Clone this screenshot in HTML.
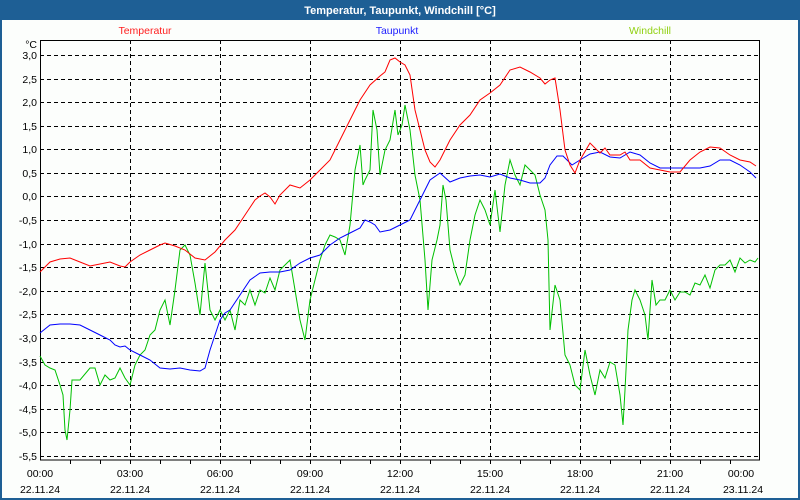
<!DOCTYPE html>
<html><head><meta charset="utf-8"><style>
html,body{margin:0;padding:0;width:800px;height:500px;overflow:hidden;background:#fcfefc;}
svg{display:block;}
</style></head><body>
<svg width="800" height="500" xmlns="http://www.w3.org/2000/svg" font-family="Liberation Sans, sans-serif" font-size="10.5">
<rect x="0" y="0" width="800" height="500" fill="#fcfefc"/>
<rect x="0" y="0" width="800" height="20" fill="#1e5f95"/>
<rect x="0" y="0" width="2" height="500" fill="#1e5f95"/>
<rect x="798" y="0" width="2" height="500" fill="#1e5f95"/>
<rect x="0" y="498" width="800" height="2" fill="#1e5f95"/>
<text x="400" y="14" fill="#fff" font-weight="bold" font-size="11" text-anchor="middle">Temperatur, Taupunkt, Windchill [°C]</text>
<text x="145" y="34" fill="#ff2020" text-anchor="middle">Temperatur</text>
<text x="397" y="34" fill="#2020ff" text-anchor="middle">Taupunkt</text>
<text x="650" y="34" fill="#90d010" text-anchor="middle">Windchill</text>
<g stroke="#000" stroke-width="1" stroke-dasharray="4,3" fill="none">
<path d="M40 55.5H760M40 79.5H760M40 102.5H760M40 126.5H760M40 149.5H760M40 173.5H760M40 196.5H760M40 220.5H760M40 244.5H760M40 267.5H760M40 291.5H760M40 314.5H760M40 338.5H760M40 362.5H760M40 385.5H760M40 409.5H760M40 432.5H760M40 456.5H760"/>
<path d="M130.5 40V460M220.5 40V460M310.5 40V460M400.5 40V460M490.5 40V460M580.5 40V460M670.5 40V460"/>
</g>
<rect x="40.5" y="40.5" width="719" height="419.5" fill="none" stroke="#000" stroke-width="1"/>
<g stroke="#000"><path d="M70.5 460V464M100.5 460V464M130.5 460V464M160.5 460V464M190.5 460V464M220.5 460V464M250.5 460V464M280.5 460V464M310.5 460V464M340.5 460V464M370.5 460V464M400.5 460V464M430.5 460V464M460.5 460V464M490.5 460V464M520.5 460V464M550.5 460V464M580.5 460V464M610.5 460V464M640.5 460V464M670.5 460V464M700.5 460V464M730.5 460V464"/></g>
<g fill="#000" text-anchor="end">
<text x="37" y="48">°C</text>
<text x="37" y="59">3,0</text><text x="37" y="83">2,5</text><text x="37" y="106">2,0</text><text x="37" y="130">1,5</text><text x="37" y="153">1,0</text><text x="37" y="177">0,5</text><text x="37" y="200">0,0</text><text x="37" y="248">-1,0</text><text x="37" y="224">-0,5</text><text x="37" y="271">-1,5</text><text x="37" y="295">-2,0</text><text x="37" y="318">-2,5</text><text x="37" y="342">-3,0</text><text x="37" y="366">-3,5</text><text x="37" y="389">-4,0</text><text x="37" y="413">-4,5</text><text x="37" y="436">-5,0</text><text x="37" y="460">-5,5</text>
</g>
<g fill="#000" text-anchor="middle">
<text x="40" y="477">00:00</text><text x="130" y="477">03:00</text><text x="220" y="477">06:00</text><text x="310" y="477">09:00</text><text x="400" y="477">12:00</text><text x="490" y="477">15:00</text><text x="580" y="477">18:00</text><text x="670" y="477">21:00</text><text x="741" y="477">00:00</text>
<text x="40" y="493">22.11.24</text><text x="130" y="493">22.11.24</text><text x="220" y="493">22.11.24</text><text x="310" y="493">22.11.24</text><text x="400" y="493">22.11.24</text><text x="490" y="493">22.11.24</text><text x="580" y="493">22.11.24</text><text x="670" y="493">22.11.24</text><text x="743" y="493">23.11.24</text>
</g>
<g fill="none" stroke-width="1">
<polyline stroke="#00c000" points="40,356 45,365 50,368 55,370 60,385 63,395 65,430 67,440 70,410 72,380 80,380 90,368 95,368 100,385 105,375 110,380 115,378 120,368 125,378 130,385 135,365 140,355 145,350 150,335 155,330 160,310 165,300 170,325 175,290 180,250 185,245 190,255 195,283 200,315 205,263 210,310 215,320 220,310 225,320 230,310 235,330 240,300 245,305 250,290 255,305 260,290 265,293 270,278 275,290 280,270 285,265 290,260 295,290 300,320 305,340 310,300 315,280 320,260 325,245 330,235 335,237 340,240 345,255 350,225 355,170 360,145 363,185 365,180 370,170 373,110 377,130 380,175 385,150 390,140 395,110 398,135 402,125 405,105 410,130 415,175 420,200 425,260 428,310 432,260 437,240 440,225 443,185 446,200 450,250 455,270 460,285 465,275 470,240 475,215 480,200 485,210 490,225 495,190 500,232 505,185 510,160 515,175 520,185 525,165 530,170 535,175 540,195 545,210 548,240 550,330 555,285 560,300 565,355 570,365 575,385 580,390 585,350 590,375 595,395 600,370 605,378 610,362 615,365 620,395 623,425 625,390 628,330 632,300 635,290 640,300 645,315 648,340 652,280 656,305 660,300 665,300 670,290 675,300 680,292 685,292 690,295 695,283 700,285 705,275 710,288 715,270 720,265 725,265 730,260 735,272 740,258 745,263 750,260 755,262 758,258"/>
<polyline stroke="#0000ff" points="40,333 50,325 60,324 70,324 80,325 90,330 100,335 110,340 115,345 120,347 125,346 130,350 140,355 150,360 160,368 170,369 180,368 190,370 200,371 205,368 210,350 215,335 220,320 225,313 230,310 240,295 250,280 260,273 270,272 280,272 290,270 300,263 310,258 320,255 330,245 340,238 350,233 360,228 365,220 370,222 375,225 380,232 390,230 400,225 410,220 420,200 430,180 440,173 450,182 460,178 470,176 480,175 490,177 500,174 510,178 520,180 530,183 540,183 545,178 550,165 557,156 563,156 572,165 580,160 590,154 600,152 610,157 620,158 630,152 640,155 650,163 660,168 670,168 680,168 690,168 700,168 710,166 720,160 730,160 740,165 750,172 756,178"/>
<polyline stroke="#ff0000" points="40,272 50,262 60,259 70,258 80,262 90,266 100,264 110,262 120,266 125,267 130,262 140,255 150,250 160,245 165,243 175,246 185,250 195,258 205,260 215,252 225,240 235,230 245,215 255,200 260,196 265,193 270,197 275,204 280,195 290,185 300,188 310,180 320,170 330,160 340,140 350,120 360,100 370,85 380,76 385,72 390,60 395,58 400,62 405,65 410,75 415,110 420,130 425,150 430,162 435,167 440,160 450,140 460,125 470,115 480,100 490,93 500,85 510,70 520,67 530,72 540,78 545,84 550,80 555,78 560,110 565,150 570,165 575,173 580,160 590,143 600,153 605,148 610,155 620,155 625,152 630,160 640,160 650,168 660,170 670,172 680,172 690,160 700,152 710,147 720,148 730,155 740,160 750,162 756,166"/>
</g>
</svg>
</body></html>
